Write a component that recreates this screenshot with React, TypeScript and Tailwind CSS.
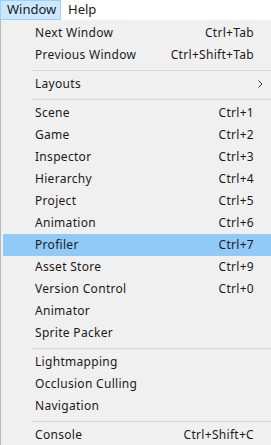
import { Fragment } from "react"

type Item = { label: string; shortcut?: string; submenu?: boolean; active?: boolean } | "sep"

const items: Item[] = [
  { label: "Next Window", shortcut: "Ctrl+Tab" },
  { label: "Previous Window", shortcut: "Ctrl+Shift+Tab" },
  "sep",
  { label: "Layouts", submenu: true },
  "sep",
  { label: "Scene", shortcut: "Ctrl+1" },
  { label: "Game", shortcut: "Ctrl+2" },
  { label: "Inspector", shortcut: "Ctrl+3" },
  { label: "Hierarchy", shortcut: "Ctrl+4" },
  { label: "Project", shortcut: "Ctrl+5" },
  { label: "Animation", shortcut: "Ctrl+6" },
  { label: "Profiler", shortcut: "Ctrl+7", active: true },
  { label: "Asset Store", shortcut: "Ctrl+9" },
  { label: "Version Control", shortcut: "Ctrl+0" },
  { label: "Animator" },
  { label: "Sprite Packer" },
  "sep",
  { label: "Lightmapping" },
  { label: "Occlusion Culling" },
  { label: "Navigation" },
  "sep",
  { label: "Console", shortcut: "Ctrl+Shift+C" },
]

function Chevron() {
  return (
    <svg width="5" height="8" viewBox="0 0 5 8" className="text-[#333]">
      <path d="M0.5 0.5 L4 4 L0.5 7.5" fill="none" stroke="currentColor" strokeWidth="1" />
    </svg>
  )
}

export default function App() {
  return (
    <div className="w-[271px] h-[445px] overflow-hidden bg-white text-[#1a1a1a] font-['Noto_Sans',sans-serif]">
      <div className="flex h-5 items-center bg-white text-[13px]">
        <div className="flex h-5 w-[61px] items-center border border-[#99d1ff] bg-[#cce8ff] pl-[6px]">Window</div>
        <div className="pl-[7px]">Help</div>
      </div>
      <div className="border-l border-[#b9b9b9] bg-[#f0f0f0] pt-[2px] text-[12px] tracking-[0.3px]">
        {items.map((item, i) =>
          item === "sep" ? (
            <div key={i} className="pt-[4px] pb-[2px] pl-[30px]">
              <div className="h-px bg-[#d7d7d7]" />
            </div>
          ) : (
            <Fragment key={i}>
              <div
                className={`flex h-[22px] items-center pr-[17px] ${
                  item.active ? "ml-[2px] bg-[#91c9f7] pl-[32px]" : "pl-[34px]"
                }`}
              >
                <span className="flex-1">{item.label}</span>
                {item.shortcut && <span>{item.shortcut}</span>}
                {item.submenu && (
                  <span className="-mr-[9px]">
                    <Chevron />
                  </span>
                )}
              </div>
            </Fragment>
          )
        )}
      </div>
    </div>
  )
}
